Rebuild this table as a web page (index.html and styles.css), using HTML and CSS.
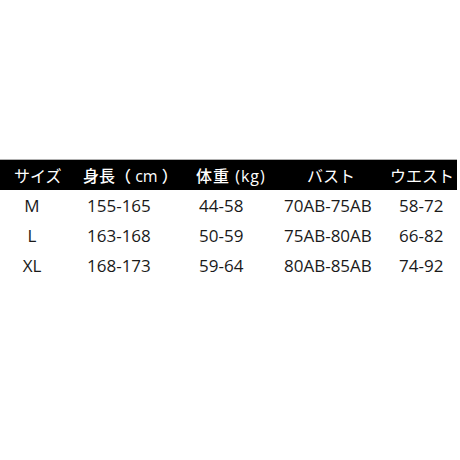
FILE: index.html
```html
<!DOCTYPE html>
<html lang="ja">
<head>
<meta charset="utf-8">
<link rel="stylesheet" href="styles.css">
</head>
<body>
<div class="table">
  <div class="row head">
    <div class="c c1">サイズ</div>
    <div class="c c2">身長（ cm ）</div>
    <div class="c c3">体重 (kg)</div>
    <div class="c c4">バスト</div>
    <div class="c c5">ウエスト</div>
  </div>
  <div class="row body">
    <div class="c c1">M</div>
    <div class="c c2">155-165</div>
    <div class="c c3">44-58</div>
    <div class="c c4">70AB-75AB</div>
    <div class="c c5">58-72</div>
  </div>
  <div class="row body">
    <div class="c c1">L</div>
    <div class="c c2">163-168</div>
    <div class="c c3">50-59</div>
    <div class="c c4">75AB-80AB</div>
    <div class="c c5">66-82</div>
  </div>
  <div class="row body">
    <div class="c c1">XL</div>
    <div class="c c2">168-173</div>
    <div class="c c3">59-64</div>
    <div class="c c4">80AB-85AB</div>
    <div class="c c5">74-92</div>
  </div>
</div>
</body>
</html>
```
FILE: styles.css
```css
html, body {
  margin: 0;
  padding: 0;
  background: #fff;
}
body {
  width: 460px;
  height: 460px;
  font-family: "Open Sans", "Noto Sans CJK JP", sans-serif;
  color: #1a1a1a;
}
.table {
  padding-top: 159px;
  width: 457px;
}
.row {
  display: grid;
  grid-template-columns: 80px 110px 90px 105px 72px;
  height: 30px;
  align-items: center;
  white-space: nowrap;
}
.head {
  background: #000;
  color: #fff;
  border-top: 1px solid #b0b0b0;
  height: 30px;
  font-family: "Open Sans", "Noto Sans CJK JP", sans-serif;
  font-size: 16px;
  font-weight: 400;
}
.body {
  font-size: 17px;
}
.head .c1 { padding-left: 14px; }
.head .c2 { padding-left: 3px; font-weight: 500; }
.head .c3 { padding-left: 6px; letter-spacing: 1px; font-weight: 500; }
.head .c4 { padding-left: 27px; }
.head .c5 { padding-left: 5px; }
.body .c1 { text-align: center; padding-right: 16px; }
.body .c2 { padding-left: 7px; }
.body .c3 { padding-left: 9px; }
.body .c4 { padding-left: 4px; }
.body .c5 { padding-left: 14px; }
```
